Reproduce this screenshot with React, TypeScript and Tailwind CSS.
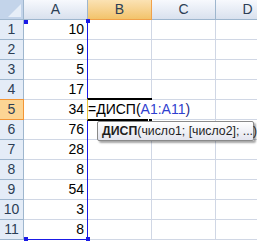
import React from "react";

const values = [10, 9, 5, 17, 34, 76, 28, 8, 54, 3, 8];
const cols = ["A", "B", "C", "D"];

const Handle = ({ className }: { className: string }) => (
  <div className={`absolute w-[4px] h-[4px] bg-[#1a1ae6] ${className}`} />
);

export default function App() {
  return (
    <div className="relative w-[257px] h-[241px] overflow-hidden bg-white font-['Liberation_Sans',Arial,sans-serif] text-[14px] text-black">
      {/* column headers */}
      <div className="flex h-[20px]">
        <div className="relative w-[24px] shrink-0 bg-[#c3d4ea] border-r border-b border-[#9eb6ce] overflow-hidden">
          <div className="absolute right-[2px] bottom-[2px] w-0 h-0 border-l-[13px] border-l-transparent border-b-[13px] border-b-[#e6eef8]" />
        </div>
        {cols.map((c) => (
          <div
            key={c}
            className={
              c === "B"
                ? "w-[64px] shrink-0 flex items-center justify-center bg-gradient-to-b from-[#fbe2b3] to-[#f2c36a] border-r border-b border-[#f0a14a] text-[#2c3e55]"
                : "w-[64px] shrink-0 flex items-center justify-center bg-gradient-to-b from-[#f7f9fd] to-[#d9e1ee] border-r border-b border-[#9eb6ce] text-[#2c3e55]"
            }
          >
            {c}
          </div>
        ))}
      </div>

      {/* rows */}
      {values.map((v, i) => {
        const active = i === 4;
        return (
          <div key={i} className="flex h-[20px]">
            <div
              className={
                active
                  ? "w-[24px] shrink-0 flex items-center justify-center bg-[#fcd594] border-r border-y border-[#f29536] -mt-px h-[21px] text-[#2c3e55]"
                  : "w-[24px] shrink-0 flex items-center justify-center bg-[#e4ecf7] border-r border-b border-[#9eb6ce] text-[#2c3e55]"
              }
            >
              {i + 1}
            </div>
            <div className="w-[64px] shrink-0 flex items-center justify-end pr-[3px] border-r border-b border-[#d0d7e5]">
              {v}
            </div>
            <div className="w-[64px] shrink-0 border-r border-b border-[#d0d7e5]" />
            <div className="w-[64px] shrink-0 border-r border-b border-[#d0d7e5]" />
            <div className="w-[64px] shrink-0 border-r border-b border-[#d0d7e5]" />
          </div>
        );
      })}

      {/* range selection A1:A11 */}
      <div className="absolute left-[24px] top-[20px] w-[64px] h-[220px] border-r border-b border-[#1a1ae6]" />
      <Handle className="left-[24px] top-[20px]" />
      <Handle className="left-[86px] top-[19px]" />
      <Handle className="left-[24px] top-[237px]" />
      <Handle className="left-[86px] top-[237px]" />

      {/* active cell in edit mode */}
      <div className="absolute left-[87px] top-[98px] w-[65px] h-[23px] border-y-2 border-black border-l border-l-[#e8c43a] bg-white" />
      <div className="absolute left-[88px] top-[100px] h-[19px] flex items-center bg-white pr-[2px] whitespace-nowrap">
        <span>=ДИСП(</span>
        <span className="text-[#2f3fd0]">A1:A11</span>
        <span className="text-[#2b2b8a]">)</span>
      </div>
      <div className="absolute left-[148px] top-[118px] w-[5px] h-[5px] bg-black border border-white" />

      {/* function tooltip */}
      <div className="absolute left-[97px] top-[121px] w-[157px] h-[20px] rounded-[2px] border border-[#8a8a8a] bg-gradient-to-b from-white to-[#e3e4ee] shadow-[2px_2px_2px_rgba(0,0,0,0.35)] flex items-center pl-[4px] whitespace-nowrap text-[12.3px] text-[#1e1e1e]">
        <span className="font-bold">ДИСП</span>
        <span>(число1; [число2]; ...)</span>
      </div>
    </div>
  );
}
